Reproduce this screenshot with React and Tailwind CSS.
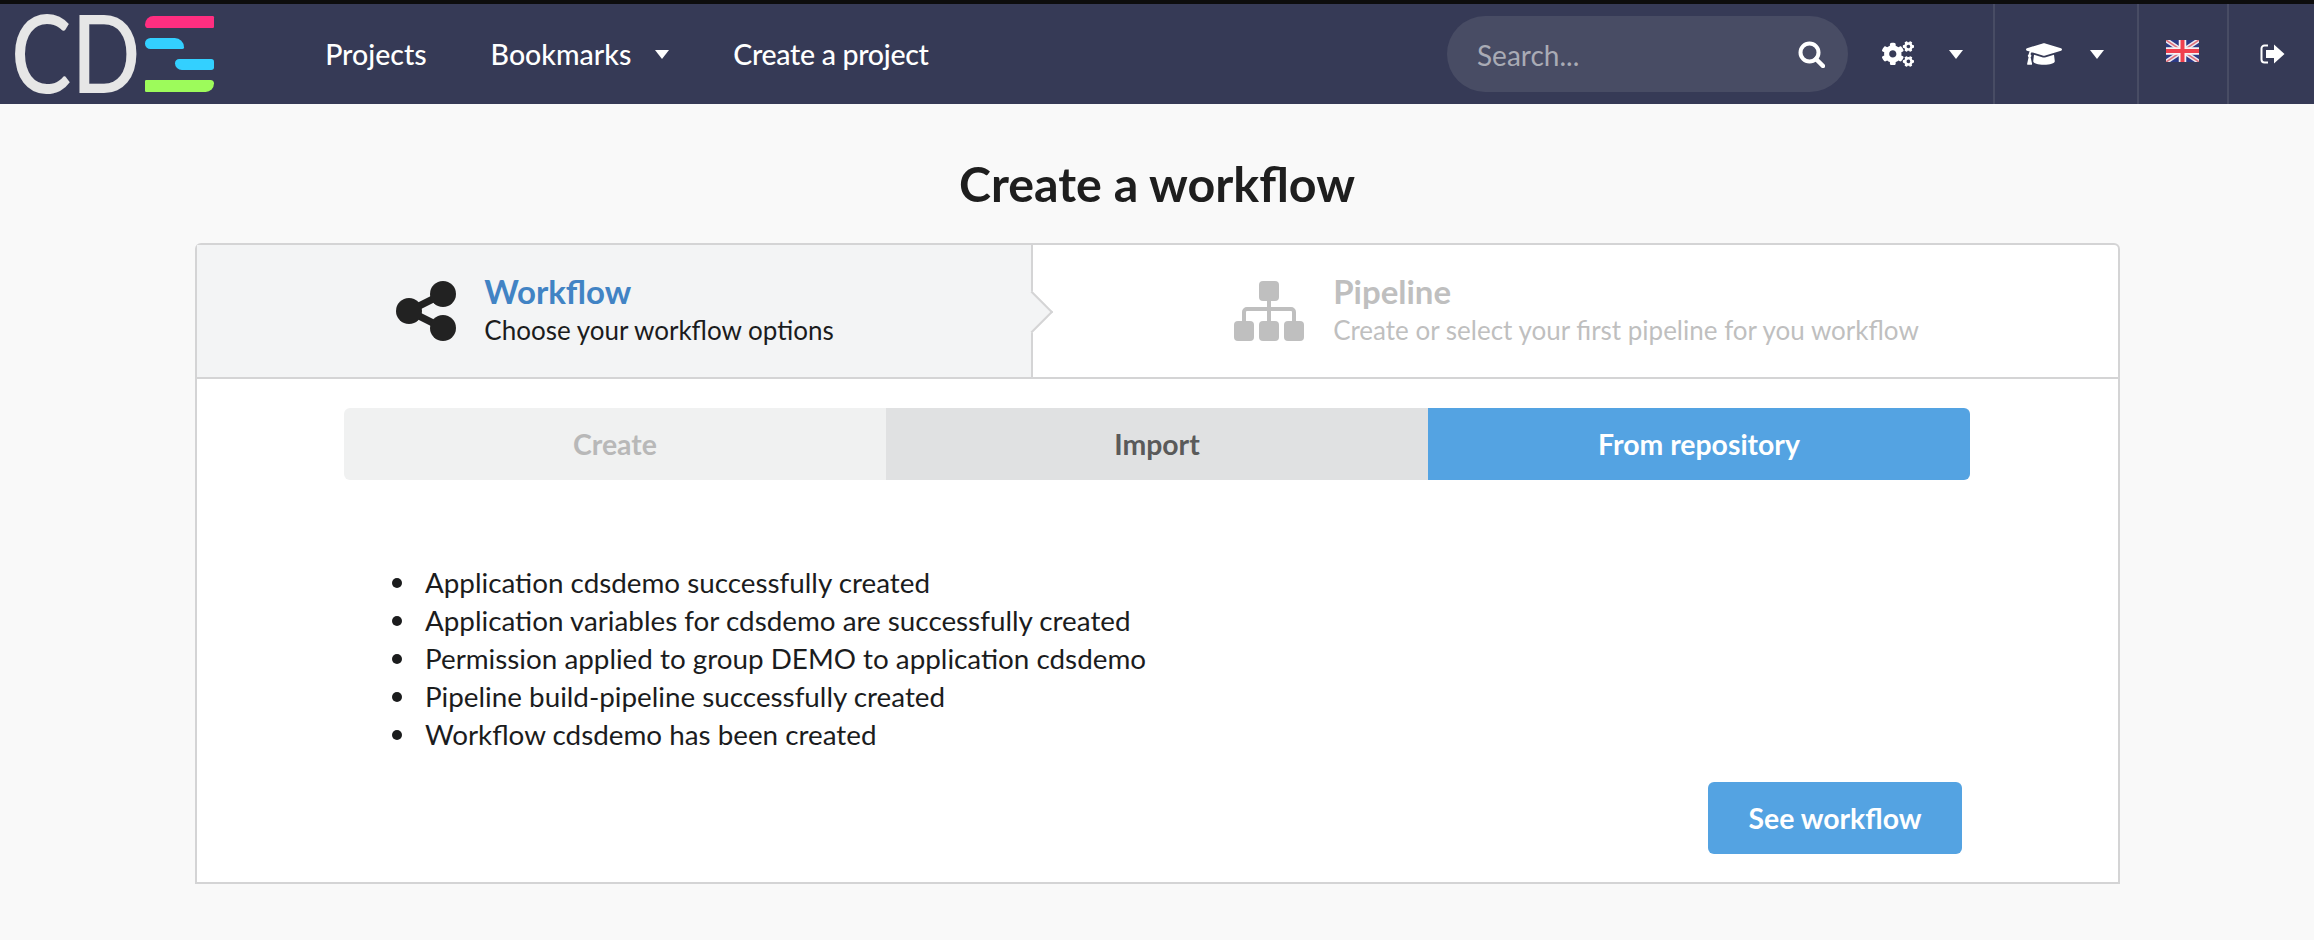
import React from 'react';
import { FaCogs, FaGraduationCap } from 'react-icons/fa';

const Caret = () => (
    <svg width="14" height="9" viewBox="0 0 14 9" className="shrink-0">
        <path d="M0 0h14L7 9z" fill="#fff" />
    </svg>
);

const SearchIcon = () => (
    <svg width="27" height="27" viewBox="0 0 27 27">
        <circle cx="11.5" cy="11.5" r="9" fill="none" stroke="#fff" strokeWidth="4" />
        <path d="M18 18l7 7" stroke="#fff" strokeWidth="4.5" strokeLinecap="round" />
    </svg>
);

const ShareIcon = () => (
    <svg width="60" height="60" viewBox="0 0 60 60">
        <path d="M13 30L47 13M13 30l34 17" stroke="#222" strokeWidth="7" />
        <circle cx="13" cy="30" r="13" fill="#222" />
        <circle cx="47" cy="13" r="13" fill="#222" />
        <circle cx="47" cy="47" r="13" fill="#222" />
    </svg>
);

const PipelineIcon = () => (
    <svg width="70" height="60" viewBox="0 0 70 60">
        <path d="M35 15v30M10 45V31a3 3 0 0 1 3-3h44a3 3 0 0 1 3 3v14" fill="none" stroke="#bfbfbf" strokeWidth="4" />
        <rect x="25" width="20" height="20" rx="4" fill="#bfbfbf" />
        <rect y="40" width="20" height="20" rx="4" fill="#bfbfbf" />
        <rect x="25" y="40" width="20" height="20" rx="4" fill="#bfbfbf" />
        <rect x="50" y="40" width="20" height="20" rx="4" fill="#bfbfbf" />
    </svg>
);

const UkFlag = () => (
    <svg width="33" height="22" viewBox="0 0 33 22">
        <rect width="33" height="22" fill="#2c3a86" />
        <path d="M0 0l33 22M33 0L0 22" stroke="#eceaf2" strokeWidth="4.5" />
        <path d="M0 0l33 22M33 0L0 22" stroke="#e0707c" strokeWidth="1.5" />
        <path d="M16.5 0v22M0 11h33" stroke="#f6f2f4" strokeWidth="7.5" />
        <path d="M16.5 0v22M0 11h33" stroke="#f0404e" strokeWidth="4" />
    </svg>
);

const SignOut = () => (
    <svg width="25" height="20" viewBox="0 0 25 20">
        <path d="M8 1.5H4.5A3 3 0 0 0 1.5 4.5v11a3 3 0 0 0 3 3H8" fill="none" stroke="#fff" strokeWidth="2" />
        <path d="M6 6h8V0.5L24.5 10 14 19.5V14H6z" fill="#fff" />
    </svg>
);

const Logo = () => (
    <div className="flex items-center ml-[11px] shrink-0">
        <span className="block origin-left scale-x-[0.84] whitespace-nowrap font-['Lato'] font-medium text-[#e6e6e6] text-[108px] leading-[94px] mr-[-20px] -mt-[6px]">CD</span>
        <div className="flex flex-col gap-[10px] w-[69px] shrink-0">
            <div className="h-[12px] w-[69px] bg-[#ff2e80] rounded-tl-[14px] rounded-bl-[6px] rounded-r-[2px]"></div>
            <div className="h-[11px] w-[39px] bg-[#33d0ff] rounded-l-[6px] rounded-tr-[10px] rounded-br-[2px]"></div>
            <div className="h-[11px] w-[39px] ml-[30px] bg-[#33d0ff] rounded-r-[4px] rounded-bl-[10px] rounded-tl-[6px]"></div>
            <div className="h-[12px] w-[69px] bg-[#9dfb5b] rounded-l-[2px] rounded-br-[14px] rounded-tr-[6px]"></div>
        </div>
    </div>
);

const Navbar = () => (
    <nav className="h-[104px] border-t-[4px] border-[#0d0d0d] bg-[#363a56] flex items-stretch font-['Lato'] text-white">
        <Logo />
        <div className="flex items-center ml-[111px] text-[28.5px] font-medium gap-[64px]">
            <span>Projects</span>
            <span className="flex items-center gap-[24px]">Bookmarks <Caret /></span>
            <span className="tracking-[-0.3px]">Create a project</span>
        </div>
        <div className="ml-auto flex items-stretch">
            <div className="self-center w-[401px] h-[76px] rounded-full bg-[#484c64] flex items-center justify-between pl-[30px] pr-[23px]">
                <span className="text-[28px] text-[#a9abb5] pt-[2px]">Search...</span>
                <SearchIcon />
            </div>
            <div className="w-[145px] flex items-center pl-[34px] gap-[35px]">
                <FaCogs size={32} />
                <Caret />
            </div>
            <div className="w-[144px] flex items-center border-l-2 border-[#484c64] pl-[31px] gap-[28px]">
                <FaGraduationCap size={36} />
                <Caret />
            </div>
            <div className="w-[90px] flex items-center border-l-2 border-[#484c64] pl-[27px] pb-[6px]">
                <UkFlag />
            </div>
            <div className="w-[87px] flex items-center border-l-2 border-[#484c64] pl-[31px]">
                <SignOut />
            </div>
        </div>
    </nav>
);

const Step = ({ icon, title, subtitle, active }) => (
    <div className={active ? 'relative w-[836px] shrink-0 bg-[#f3f4f5] border-r-2 border-[#d4d4d5] flex items-center justify-center gap-[28px] pl-[2px]' : 'flex-1 flex items-center justify-center gap-[29px] pl-[2px]'}>
        {icon}
        <div className="-mt-[2px]">
            <div className={active ? 'text-[33px] leading-[40px] font-bold text-[#4183c4]' : 'text-[33px] leading-[40px] font-bold text-[#bfbfbf]'}>{title}</div>
            <div className={active ? 'text-[26px] leading-[38px] text-[#1b1c1d]' : 'text-[26px] leading-[38px] text-[#bfbfbf]'}>{subtitle}</div>
        </div>
        {active && (
            <div className="absolute top-[52px] -right-[16px] w-[30px] h-[30px] rotate-45 bg-[#f3f4f5] border-t-2 border-r-2 border-[#d4d4d5]"></div>
        )}
    </div>
);

const results = [
    'Application cdsdemo successfully created',
    'Application variables for cdsdemo are successfully created',
    'Permission applied to group DEMO to application cdsdemo',
    'Pipeline build-pipeline successfully created',
    'Workflow cdsdemo has been created',
];

const App = () => {
    return (
        <div className="w-[2314px] h-[940px] overflow-hidden bg-[#f9f9f9] font-['Lato'] text-[#1b1c1d]">
            <Navbar />
            <main className="px-[195px]">
                <h1 className="text-[48.4px] leading-[60px] font-bold text-center pt-[49px] h-[139px] text-[#1e1e1e]">Create a workflow</h1>
                <div className="w-[1925px] h-[641px] bg-white border-2 border-[#d4d4d5] rounded-t-[6px]">
                    <div className="flex h-[134px] border-b-2 border-[#d4d4d5]">
                        <Step
                            active
                            icon={<ShareIcon />}
                            title="Workflow"
                            subtitle="Choose your workflow options"
                        />
                        <Step
                            icon={<PipelineIcon />}
                            title="Pipeline"
                            subtitle="Create or select your first pipeline for you workflow"
                        />
                    </div>
                    <div className="flex h-[72px] mt-[29px] ml-[147px] mr-[148px] text-[28.4px] font-bold">
                        <div className="flex-1 flex items-center justify-center rounded-l-[6px] bg-[#f0f1f1] text-[#b8b8b8]">Create</div>
                        <div className="flex-1 flex items-center justify-center bg-[#e0e1e2] text-[#5a5a5a]">Import</div>
                        <div className="flex-1 flex items-center justify-center rounded-r-[6px] bg-[#54a3e2] text-white">From repository</div>
                    </div>
                    <ul className="ml-[195px] mt-[84px] text-[27.8px] leading-[38px]">
                        {results.map((msg) => (
                            <li key={msg} className="flex items-center gap-[23px]">
                                <span className="w-[10px] h-[10px] rounded-full bg-[#1b1c1d] shrink-0"></span>
                                {msg}
                            </li>
                        ))}
                    </ul>
                    <div className="flex justify-end mr-[156px] mt-[28px]">
                        <button className="w-[254px] h-[72px] rounded-[6px] bg-[#54a3e2] text-white text-[28.4px] font-bold">See workflow</button>
                    </div>
                </div>
            </main>
        </div>
    );
};

export default App;
